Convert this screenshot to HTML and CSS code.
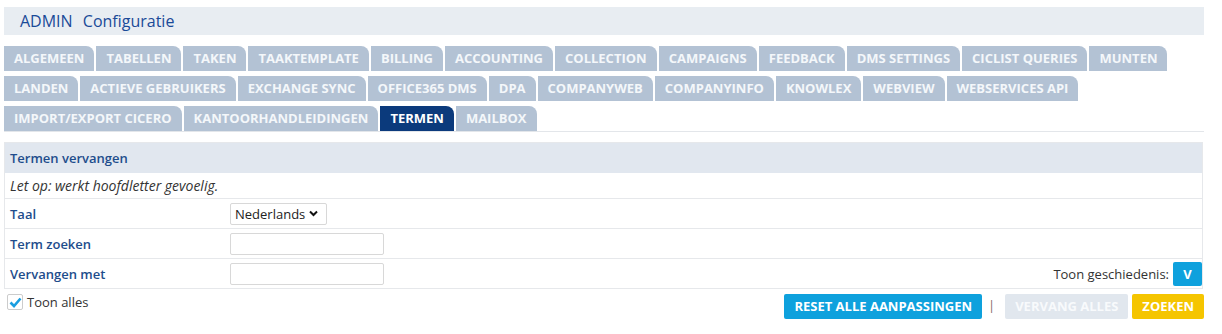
FILE: index.html
```html
<!DOCTYPE html>
<html>
<head>
<meta charset="utf-8">
<link rel="stylesheet" href="styles.css">
</head>
<body>
<div class="page">
  <div class="titlebar"><span class="t1">ADMIN</span> <span class="t2">Configuratie</span></div>
  <div class="tabs">
    <div class="tabrow">
      <span class="tab">ALGEMEEN</span><span class="tab">TABELLEN</span><span class="tab">TAKEN</span><span class="tab">TAAKTEMPLATE</span><span class="tab">BILLING</span><span class="tab">ACCOUNTING</span><span class="tab">COLLECTION</span><span class="tab">CAMPAIGNS</span><span class="tab">FEEDBACK</span><span class="tab">DMS SETTINGS</span><span class="tab">CICLIST QUERIES</span><span class="tab">MUNTEN</span>
    </div>
    <div class="tabrow">
      <span class="tab">LANDEN</span><span class="tab">ACTIEVE GEBRUIKERS</span><span class="tab">EXCHANGE SYNC</span><span class="tab">OFFICE365 DMS</span><span class="tab">DPA</span><span class="tab">COMPANYWEB</span><span class="tab">COMPANYINFO</span><span class="tab">KNOWLEX</span><span class="tab">WEBVIEW</span><span class="tab">WEBSERVICES API</span>
    </div>
    <div class="tabrow">
      <span class="tab">IMPORT/EXPORT CICERO</span><span class="tab">KANTOORHANDLEIDINGEN</span><span class="tab active">TERMEN</span><span class="tab">MAILBOX</span>
    </div>
  </div>
  <div class="panel">
    <div class="panel-head">Termen vervangen</div>
    <div class="row note">Let op: werkt hoofdletter gevoelig.</div>
    <div class="row">
      <div class="label">Taal</div>
      <div class="field"><div class="select">Nederlands <svg width="9" height="7" viewBox="0 0 9 7"><path d="M1 1.5 L4.5 5 L8 1.5" fill="none" stroke="#111" stroke-width="2"/></svg></div></div>
    </div>
    <div class="row">
      <div class="label">Term zoeken</div>
      <div class="field"><div class="input"></div></div>
    </div>
    <div class="row">
      <div class="label">Vervangen met</div>
      <div class="field"><div class="input"></div></div>
      <div class="history">Toon geschiedenis: <span class="vbtn">V</span></div>
    </div>
  </div>
  <div class="footer">
    <label class="check"><span class="box"><svg width="13" height="11" viewBox="0 0 13 11"><path d="M1.5 5.5 L5 9 L11.5 1.5" fill="none" stroke="#1a9ee0" stroke-width="2.6"/></svg></span>Toon alles</label>
    <div class="actions">
      <span class="btn blue">RESET ALLE AANPASSINGEN</span>
      <span class="sep">|</span>
      <span class="btn grey">VERVANG ALLES</span>
      <span class="btn yellow">ZOEKEN</span>
    </div>
  </div>
</div>
</body>
</html>
```
FILE: styles.css
```css
* { box-sizing: border-box; }
body {
  margin: 0;
  font-family: "Open Sans", "Liberation Sans", sans-serif;
  font-size: 13px;
  color: #333;
  background: #fff;
}
.page {
  width: 1200px;
  margin: 7px 0 0 4px;
}
.titlebar {
  height: 28px;
  background: #e8edf2;
  color: #1a4a98;
  font-size: 16px;
  line-height: 29px;
  padding-left: 16px;
}
.titlebar .t1 { margin-right: 6px; }
.tabs {
  margin-top: 11px;
  border-bottom: 1px solid #e3e6ea;
}
.tabrow {
  display: flex;
  gap: 2px;
  margin-bottom: 5px;
}
.tabrow:last-child { margin-bottom: 0; }
.tab {
  height: 25px;
  line-height: 25px;
  padding: 0 10px;
  background: #b3c2d4;
  color: #f4f7fa;
  font-weight: 700;
  font-size: 13px;
  border-top-right-radius: 8px;
  white-space: nowrap;
}
.tab.active { background: #0b3a7c; color: #fff; }
.panel {
  margin-top: 10px;
  border: 1px solid #e6e8eb;
  width: 1199px;
}
.panel-head {
  height: 30px;
  line-height: 30px;
  background: #e1e7ef;
  color: #1e4d8c;
  font-weight: 600;
  padding-left: 5px;
}
.row {
  display: flex;
  align-items: center;
  height: 30px;
  border-top: 1px solid #e6e8eb;
  padding-left: 5px;
}
.row.note {
  height: 25px;
  border-top: none;
  font-style: italic;
  font-size: 14px;
  color: #333;
}
.label {
  width: 220px;
  color: #1e4d8c;
  font-weight: 600;
}
.field { flex: 1; }
.select {
  display: inline-flex;
  align-items: center;
  gap: 4px;
  height: 22px;
  width: 97px;
  border: 1px solid #d8d8d8;
  border-radius: 2px;
  padding: 0 4px;
  color: #222;
  font-size: 13px;
}
.input {
  width: 154px;
  height: 22px;
  border: 1px solid #d8d8d8;
  border-radius: 2px;
}
.history {
  display: flex;
  align-items: center;
  gap: 4px;
  color: #333;
}
.vbtn {
  width: 29px;
  height: 24px;
  line-height: 24px;
  text-align: center;
  background: #0ea1dd;
  color: #fff;
  font-weight: 700;
  border-radius: 2px;
}
.footer {
  display: flex;
  justify-content: space-between;
  align-items: flex-start;
  padding-top: 3px;
}
.check {
  display: flex;
  align-items: center;
  gap: 4px;
  margin-left: 3px;
  margin-top: 1px;
  color: #333;
}
.box {
  width: 16px;
  height: 16px;
  border: 1px solid #ccc;
  border-radius: 2px;
  display: flex;
  align-items: center;
  justify-content: center;
  background: #fff;
}
.actions {
  display: flex;
  align-items: center;
  margin-top: 2px;
}
.btn {
  height: 25px;
  line-height: 25px;
  padding: 0 10px;
  color: #fff;
  font-weight: 700;
  border-radius: 2px;
  white-space: nowrap;
}
.btn.blue { background: #0ea1dd; }
.btn.grey { background: #e1e7ee; color: #f8fafc; margin-left: 10px; margin-right: 4px; }
.btn.yellow { background: #f5c500; }
.sep { color: #8a6a6a; margin-left: 6px; margin-top: -4px; }
```
